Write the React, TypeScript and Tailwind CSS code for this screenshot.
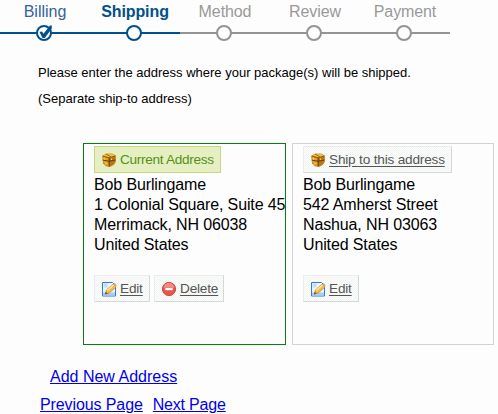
import type { ReactNode } from "react";

type StepState = "done" | "current" | "todo";

const steps: { label: string; state: StepState }[] = [
  { label: "Billing", state: "done" },
  { label: "Shipping", state: "current" },
  { label: "Method", state: "todo" },
  { label: "Review", state: "todo" },
  { label: "Payment", state: "todo" },
];

function Step({ label, state }: { label: string; state: StepState }) {
  const active = state !== "todo";
  const textColor =
    state === "current"
      ? "font-bold tracking-[-0.1px] text-[#00508c]"
      : active
        ? "text-[#33639c]"
        : "tracking-[-0.1px] text-[#999999]";
  return (
    <li className="w-[90px]">
      <div className={`flex h-[23px] items-center justify-center whitespace-nowrap text-base ${textColor}`}>{label}</div>
      <svg width="90" height="20" viewBox="0 0 90 20" className="block">
        <path d="M0 10H90" stroke={active ? "#00508c" : "#949398"} strokeWidth="2" />
        <circle cx="44" cy="10" r="7" fill="#fdfdfd" stroke={active ? "#00508c" : "#949398"} strokeWidth="2" />
        {state === "done" && <path d="M39.500 9l2.500-.5 1.500 2.200L50 2.500h1.800v3L44.800 15h-2.300z" fill="#00508c" />}
      </svg>
    </li>
  );
}

function PackageIcon() {
  return (
    <svg width="16" height="16" viewBox="0 0 16 16" className="shrink-0">
      <path d="M1.200 3.800L5 1.800l6-.3 3.800 2v6.200l-1.800 3L9 15l-4-.8-3-3z" fill="#c58212" />
      <path d="M2 3.800L5 2.200l6-.2 3 1.800-5 1.700z" fill="#f0c14a" />
      <path d="M1.600 4.500L7.500 6l.3 7.800-3-.5-2.300-2.800z" fill="#e0a229" />
      <path d="M8.500 6.200l5.700-2v5.300L12.500 12l-4 2.300z" fill="#bd7710" />
      <path d="M8.200 5.800v8.500M1.800 8l6.200 1.300L14.300 8" fill="none" stroke="#5c3d0a" />
      <path d="M1.800 4.200l6.300 1.600 6.200-1.900M5 2l5 3" fill="none" stroke="#7d540e" strokeWidth=".8" />
      <path d="M3.300 5.800v2M5 10.500v1.700M10.500 6.500v1.500" stroke="#f8d871" />
    </svg>
  );
}

function EditIcon() {
  return (
    <svg width="16" height="16" viewBox="0 0 16 16" className="shrink-0">
      <path d="M1.500 1.500h10l3 3v10.500h-13z" fill="#eaf4fe" stroke="#3d78c4" />
      <path d="M2.500 2.500h4v4h-4z" fill="#c5def6" />
      <path d="M2 11.500h12v3H2z" fill="#a9cdf1" />
      <path d="M4.200 13.200l1.200-4.200 6.800-5.800 2.800 2.800-6.800 6z" fill="#f4bd48" stroke="#b47a2c" strokeWidth=".7" />
      <path d="M6.200 9.500l6.300-5.400" stroke="#ffeaa0" strokeWidth="1.300" />
      <path d="M4.200 13.200l.7-2.300 1.700 1.600z" fill="#4b4537" />
      <path d="M12.200 3.200L13.700 2l2 2.300-.8 1.600z" fill="#e2a176" />
    </svg>
  );
}

function DeleteIcon() {
  return (
    <svg width="16" height="16" viewBox="0 0 16 16" className="shrink-0">
      <circle cx="8" cy="8" r="6.600" fill="#e8554c" stroke="#d44a43" />
      <path d="M2.800 7a5.200 5.200 0 0 1 10.400 0z" fill="#f28b81" />
      <rect x="4" y="6.500" width="8" height="3" rx=".4" fill="#fff" stroke="#dc5d55" strokeWidth=".6" />
    </svg>
  );
}

function ActionButton({ icon, width, children }: { icon: ReactNode; width: string; children: ReactNode }) {
  return (
    <button
      className={`flex h-[27px] items-center border border-t-[#ececec] border-r-[#d4d8d6] border-b-[#d4d8d6] border-l-[#ececec] bg-[#fbfcfb] bg-[repeating-conic-gradient(#f0f5f2_0_25%,#fdfdfd_0_50%)] bg-[length:2px_2px] pl-1.5 text-[#555555] ${width}`}
    >
      {icon}
      <span className="ml-[3px] whitespace-nowrap text-[13.6px] leading-[15px] tracking-[-0.18px] underline underline-offset-2">
        {children}
      </span>
    </button>
  );
}

function AddressLines({ lines }: { lines: string[] }) {
  return (
    <address className="mt-0.5 whitespace-nowrap text-base leading-5 tracking-[-0.13px] not-italic text-black">
      {lines.map((line) => (
        <div key={line}>{line}</div>
      ))}
    </address>
  );
}

export default function App() {
  return (
    <main className="h-[414px] w-[498px] overflow-hidden bg-[#fdfdfd] font-['Liberation_Sans',Arial,sans-serif] text-black">
      <ol className="flex">
        {steps.map((step) => (
          <Step key={step.label} {...step} />
        ))}
      </ol>

      <div className="mt-[17px] pl-[38px] text-[13px] leading-[26px]">
        <p>Please enter the address where your package(s) will be shipped.</p>
        <p>(Separate ship-to address)</p>
      </div>

      <div className="mt-[31px] flex gap-1.5 pl-[83px]">
        <section className="h-[202px] w-[203px] border border-[#087f08] pt-0.5 pl-2.5">
          <div className="flex h-[27px] w-[127px] items-center border border-[#c6d880] bg-[#e6efc2] pl-1.5 text-[#529214]">
            <PackageIcon />
            <span className="ml-[3px] whitespace-nowrap text-[13.6px] leading-[15px] tracking-[-0.3px]">Current Address</span>
          </div>
          <AddressLines lines={["Bob Burlingame", "1 Colonial Square, Suite 45", "Merrimack, NH 06038", "United States"]} />
          <div className="mt-5 flex gap-1">
            <ActionButton icon={<EditIcon />} width="w-14">Edit</ActionButton>
            <ActionButton icon={<DeleteIcon />} width="w-[70px]">Delete</ActionButton>
          </div>
        </section>

        <section className="h-[202px] w-[202px] border border-[#d3d3d3] pt-0.5 pl-2.5">
          <ActionButton icon={<PackageIcon />} width="w-[149px]">Ship to this address</ActionButton>
          <AddressLines lines={["Bob Burlingame", "542 Amherst Street", "Nashua, NH 03063", "United States"]} />
          <div className="mt-5">
            <ActionButton icon={<EditIcon />} width="w-14">Edit</ActionButton>
          </div>
        </section>
      </div>

      <nav className="mt-[18px] text-base leading-7 text-[#0000ee]">
        <div className="pl-[50px]">
          <a href="#add" className="underline">Add New Address</a>
        </div>
        <div className="flex gap-2.5 pl-10">
          <a href="#previous" className="tracking-[-0.1px] underline">Previous Page</a>
          <a href="#next" className="tracking-[-0.2px] underline">Next Page</a>
        </div>
      </nav>
    </main>
  );
}
